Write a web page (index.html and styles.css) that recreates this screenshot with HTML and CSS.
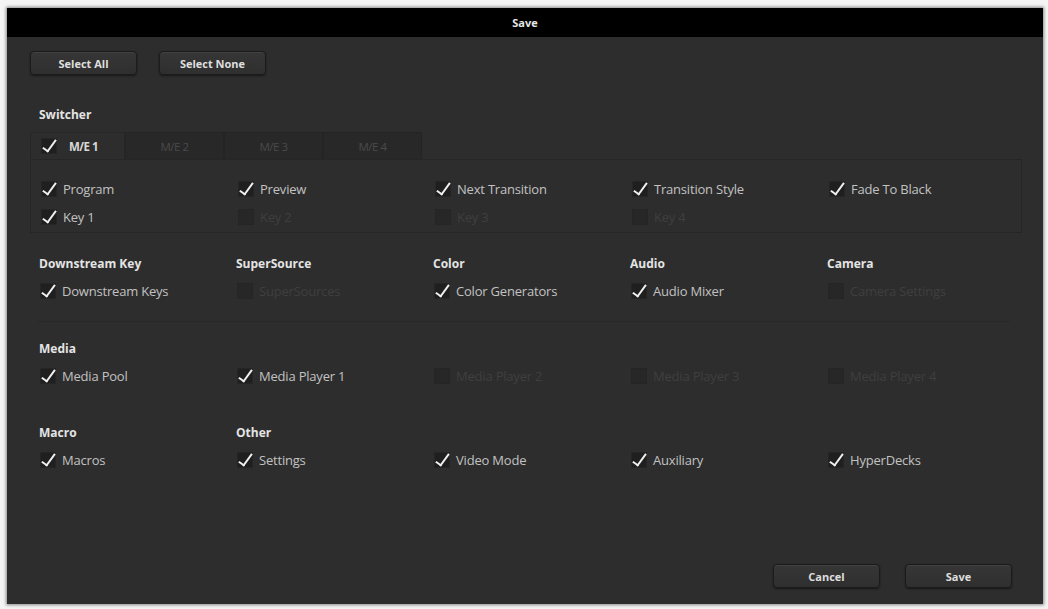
FILE: index.html
```html
<!DOCTYPE html>
<html lang="en">
  <head>
    <meta charset="UTF-8" />
    <meta name="viewport" content="width=device-width, initial-scale=1.0" />
    <title>Save</title>
    <link rel="stylesheet" href="styles.css">
  </head>
  <body>
    <div class="dialog">
      <div class="titlebar">Save</div>
      <div class="content">
        <div class="top-buttons">
          <button class="btn">Select All</button>
          <button class="btn">Select None</button>
        </div>

        <!-- switcher -->
        <h3 class="heading switcher-heading">Switcher</h3>
        <div class="tabs">
          <div class="tab active"><span class="box checked"></span>M/E 1</div>
          <div class="tab">M/E 2</div>
          <div class="tab">M/E 3</div>
          <div class="tab">M/E 4</div>
        </div>
        <div class="panel">
          <div class="grid">
            <label class="item"><span class="box checked"></span>Program</label>
            <label class="item"><span class="box checked"></span>Preview</label>
            <label class="item"><span class="box checked"></span>Next Transition</label>
            <label class="item"><span class="box checked"></span>Transition Style</label>
            <label class="item"><span class="box checked"></span>Fade To Black</label>
            <label class="item"><span class="box checked"></span>Key 1</label>
            <label class="item off"><span class="box"></span>Key 2</label>
            <label class="item off"><span class="box"></span>Key 3</label>
            <label class="item off"><span class="box"></span>Key 4</label>
          </div>
        </div>

        <div class="grid group first">
          <h3 class="heading">Downstream Key</h3>
          <h3 class="heading">SuperSource</h3>
          <h3 class="heading">Color</h3>
          <h3 class="heading">Audio</h3>
          <h3 class="heading">Camera</h3>
          <label class="item"><span class="box checked"></span>Downstream Keys</label>
          <label class="item off"><span class="box"></span>SuperSources</label>
          <label class="item"><span class="box checked"></span>Color Generators</label>
          <label class="item"><span class="box checked"></span>Audio Mixer</label>
          <label class="item off"><span class="box"></span>Camera Settings</label>
        </div>

        <div class="divider"></div>

        <div class="grid group media">
          <h3 class="heading">Media</h3>
          <span></span><span></span><span></span><span></span>
          <label class="item"><span class="box checked"></span>Media Pool</label>
          <label class="item"><span class="box checked"></span>Media Player 1</label>
          <label class="item off"><span class="box"></span>Media Player 2</label>
          <label class="item off"><span class="box"></span>Media Player 3</label>
          <label class="item off"><span class="box"></span>Media Player 4</label>
        </div>

        <div class="grid group macro">
          <h3 class="heading">Macro</h3>
          <h3 class="heading">Other</h3>
          <span></span><span></span><span></span>
          <label class="item"><span class="box checked"></span>Macros</label>
          <label class="item"><span class="box checked"></span>Settings</label>
          <label class="item"><span class="box checked"></span>Video Mode</label>
          <label class="item"><span class="box checked"></span>Auxiliary</label>
          <label class="item"><span class="box checked"></span>HyperDecks</label>
        </div>

        <div class="footer">
          <button class="btn">Cancel</button>
          <button class="btn">Save</button>
        </div>
      </div>
    </div>
  </body>
</html>
```
FILE: styles.css
```css
* {
  margin: 0;
  box-sizing: border-box;
}
body {
  background: #f4f4f4;
  font-family: "Open Sans", "Noto Sans", sans-serif;
  width: 1048px;
  height: 609px;
  overflow: hidden;
}

.dialog {
  margin: 8px 0 0 7px;
  width: 1036px;
  height: 596px;
  background: #2d2d2d;
  display: flex;
  flex-direction: column;
  box-shadow: 0 0 3px 1px rgba(0, 0, 0, 0.45);
}

.titlebar {
  height: 29px;
  background: #000;
  color: #e6e6e6;
  font-size: 11px;
  font-weight: 700;
  text-align: center;
  line-height: 29px;
}

.content {
  flex: 1;
  display: flex;
  flex-direction: column;
  padding: 14px 21px 16px 23px;
}

.btn {
  width: 107px;
  height: 24px;
  background: linear-gradient(#363636, #2f2f2f);
  border: 1px solid #1b1b1b;
  border-radius: 4px;
  box-shadow: 0 1px 2px rgba(0, 0, 0, 0.5), inset 0 1px 0 rgba(255, 255, 255, 0.06);
  color: #dedede;
  font-family: inherit;
  font-size: 11px;
  font-weight: 700;
}

.top-buttons {
  display: flex;
  gap: 22px;
}

.heading {
  font-size: 12px;
  font-weight: 700;
  color: #e4e4e4;
  line-height: 16px;
}
.switcher-heading {
  margin: 32px 0 9px 9px;
}

.tabs {
  display: flex;
  height: 27px;
}
.tab {
  width: 99px;
  display: flex;
  align-items: center;
  justify-content: center;
  background: #282828;
  border: 1px solid #242424;
  border-bottom: none;
  color: #4a4a4a;
  font-size: 11.5px;
  letter-spacing: -0.5px;
}
.tab.active {
  width: 95px;
  justify-content: flex-start;
  padding-left: 10px;
  background: #2d2d2d;
  border-color: #262626;
  color: #d8d8d8;
  font-weight: 700;
}
.tab.active .box {
  margin-right: 12px;
}

.panel {
  width: 992px;
  border: 1px solid #262626;
  padding: 15px 0 1px 10px;
}

.grid {
  display: grid;
  grid-template-columns: repeat(5, 197px);
  align-items: center;
}

.item {
  height: 28px;
  display: flex;
  align-items: center;
  color: #c2c2c2;
  font-size: 13px;
  letter-spacing: -0.2px;
}
.item .box {
  margin-right: 6px;
}
.item.off {
  color: #3f3f3f;
}

.box {
  width: 16px;
  height: 16px;
  flex: none;
  background: #272727;
  border: 1px solid #252525;
  position: relative;
}
.box.checked {
  background: #1f1f1f;
}
.box.checked::after {
  content: "";
  position: absolute;
  left: 4px;
  top: -2px;
  width: 5px;
  height: 13px;
  border-right: 2px solid #f0f0f0;
  border-bottom: 2px solid #f0f0f0;
  transform: rotate(36deg);
}

.group {
  padding-left: 10px;
  row-gap: 5px;
}
.group .heading {
  margin-left: -1px;
}
.first {
  margin-top: 23px;
}
.divider {
  height: 1px;
  width: 972px;
  margin: 16px 0 0 8px;
  background: #333;
  border-top: 1px solid #272727;
}
.media {
  margin-top: 19px;
}
.macro {
  margin-top: 35px;
}

.footer {
  margin-top: auto;
  display: flex;
  justify-content: flex-end;
  gap: 25px;
  padding-right: 10px;
}
```
